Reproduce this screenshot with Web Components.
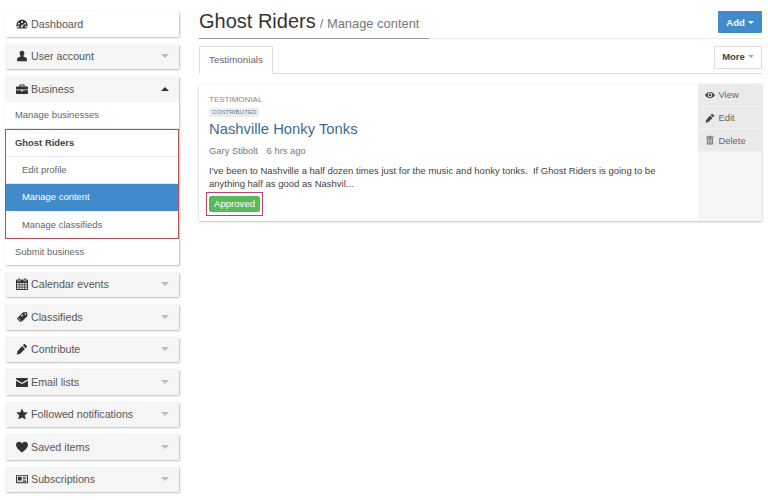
<!DOCTYPE html>
<html>
<head>
<meta charset="utf-8">
<title>Manage content</title>
<style>
  html, body { margin: 0; padding: 0; background: #fff; height: 500px; overflow: hidden; }
  body { font-family: "Liberation Sans", Arial, sans-serif; color: #333; }
</style>
</head>
<body>
<app-shell>
  <side-nav slot="side">
    <side-panel label="Dashboard" icon="dashboard" plain></side-panel>
    <side-panel label="User account" icon="user"></side-panel>
    <side-panel label="Business" icon="briefcase" open>
      <nav-link>Manage businesses</nav-link>
      <red-box>
        <nav-link strong>Ghost Riders</nav-link>
        <nav-link sub>Edit profile</nav-link>
        <nav-link sub active>Manage content</nav-link>
        <nav-link sub last>Manage classifieds</nav-link>
      </red-box>
      <nav-link last>Submit business</nav-link>
    </side-panel>
    <side-panel label="Calendar events" icon="calendar"></side-panel>
    <side-panel label="Classifieds" icon="tags"></side-panel>
    <side-panel label="Contribute" icon="pencil"></side-panel>
    <side-panel label="Email lists" icon="envelope"></side-panel>
    <side-panel label="Followed notifications" icon="star"></side-panel>
    <side-panel label="Saved items" icon="heart"></side-panel>
    <side-panel label="Subscriptions" icon="news"></side-panel>
  </side-nav>
  <page-head slot="main" title-text="Ghost Riders" sub="/ Manage content"></page-head>
  <tab-bar slot="main"></tab-bar>
  <content-card slot="main"
    kind="TESTIMONIAL" tag="CONTRIBUTED" heading="Nashville Honky Tonks"
    author="Gary Stibolt" time="6 hrs ago" status="Approved">I've been to Nashville a half dozen times just for the music and honky tonks.&nbsp; If Ghost Riders is going to be anything half as good as Nashvil...</content-card>
</app-shell>

<script>
  const ICONS = {
    dashboard: `<path fill-rule="evenodd" d="M8 2a7.500 7.500 0 0 0-7.500 7.500c0 1.700.6 3.200 1.500 4.500h12c.9-1.300 1.500-2.800 1.500-4.500A7.500 7.500 0 0 0 8 2ZM3.800 6.300a1.200 1.200 0 1 1 0 2.400 1.200 1.200 0 0 1 0-2.400Zm4.200-2.200a1.200 1.200 0 1 1 0 2.400 1.200 1.200 0 0 1 0-2.400Zm4.200 2.200a1.200 1.200 0 1 1 0 2.400 1.200 1.200 0 0 1 0-2.400ZM2.800 10.300a1.200 1.200 0 1 1 0 2.400 1.200 1.200 0 0 1 0-2.400Zm10.400 0a1.200 1.200 0 1 1 0 2.400 1.200 1.200 0 0 1 0-2.400ZM7 12.700a1.600 1.600 0 0 1 .3-2.700l3.400-2.500-1.800 4A1.600 1.600 0 0 1 7 12.700Z"/>`,
    user: `<path d="M8 1c-2 0-3.200 1.400-3.200 3.400 0 1.300.5 2.400 1.200 3.100v1.300L2.300 10.300c-.6.300-.9.7-.9 1.300V15h13.200v-3.400c0-.6-.3-1-.9-1.300L10 8.800V7.500c.7-.7 1.200-1.800 1.200-3.100C11.200 2.400 10 1 8 1Z"/>`,
    briefcase: `<path fill-rule="evenodd" d="M5.500 2h5c.6 0 1 .4 1 1v1.500H15c.5 0 1 .4 1 1v3.300H0V5.500c0-.6.5-1 1-1h3.500V3c0-.6.4-1 1-1Zm.4 1.200v1.300h4.200V3.200H5.900ZM0 9.800h6.500v1.200h3V9.800H16V13.500c0 .6-.5 1-1 1H1c-.5 0-1-.4-1-1V9.800Z"/>`,
    calendar: `<path fill-rule="evenodd" d="M3 .5h2v3H3v-3Zm8 0h2v3h-2v-3ZM1 2h1.200v2.300h3.600V2h4.400v2.300h3.600V2H15c.5 0 1 .4 1 1v12c0 .5-.5 1-1 1H1c-.5 0-1-.5-1-1V3c0-.6.5-1 1-1Zm.3 4.500v2h2.400v-2H1.300Zm3.500 0v2h2.700v-2H4.800Zm3.700 0v2h2.700v-2H8.500Zm3.800 0v2h2.400v-2h-2.400Zm-11 3v2h2.400v-2H1.300Zm3.500 0v2h2.700v-2H4.800Zm3.700 0v2h2.700v-2H8.500Zm3.800 0v2h2.400v-2h-2.400Zm-11 3v2h2.400v-2H1.300Zm3.500 0v2h2.700v-2H4.800Zm3.700 0v2h2.700v-2H8.500Zm3.800 0v2h2.400v-2h-2.400Z"/>`,
    tags: `<path fill-rule="evenodd" d="M9.500 1.500H15V7L8 14 2.500 8.500l7-7Zm3 1.500a1.100 1.100 0 1 0 0 2.200 1.100 1.100 0 0 0 0-2.200ZM6.500 6.700 7.600 7.800 9.700 5.700 8.600 4.600 6.500 6.700Z"/><path d="M1 10l5 5 1.200-1L2 9l-1 1Z"/>`,
    pencil: `<path d="M12 1.500l2.500 2.500c.4.400.4 1 0 1.400L13 6.900 9.100 3 10.600 1.500c.4-.4 1-.4 1.400 0ZM8.100 4 12 7.900 5.500 14.400 1 15.500 2 11 8.100 4Z"/>`,
    envelope: `<path d="M1 2.500h14c.5 0 1 .4 1 1v.9L8 9 0 4.400v-.9c0-.6.5-1 1-1Z"/><path d="M0 6.200 8 10.800l8-4.600v7.300c0 .5-.5 1-1 1H1c-.5 0-1-.5-1-1V6.200Z"/>`,
    star: `<path d="M8 .5l2.300 5 5.500.6-4.100 3.700 1.200 5.400L8 12.500l-4.900 2.700 1.200-5.400L.2 6.100l5.500-.6L8 .5Z"/>`,
    heart: `<path d="M8 15.500S0 10.200 0 5.100C0 2.800 1.900 1 4.100 1 5.800 1 7.300 2 8 3.500 8.700 2 10.200 1 11.900 1 14.100 1 16 2.800 16 5.100 16 10.200 8 15.500 8 15.500Z"/>`,
    news: `<path fill-rule="evenodd" d="M1 2.500h14c.6 0 1 .4 1 1v9c0 .6-.4 1-1 1H1c-.6 0-1-.4-1-1v-9c0-.6.4-1 1-1Zm.3 1.300v8.400h13.400V3.800H1.300ZM2.500 5h5v4.200h-5V5Zm6.300 0h4.700v1.100H8.800V5Zm0 2h4.700v1H8.800V7Zm0 2h4.700v1H8.800V9ZM2.500 10h5v1h-5v-1Zm6.300 0.800h4.700v.9H8.800v-.9Z"/>`,
    eye: `<path fill-rule="evenodd" d="M8 3c3.600 0 6.400 2.400 8 5-1.600 2.600-4.400 5-8 5s-6.400-2.400-8-5c1.600-2.600 4.400-5 8-5Zm0 1.500a3.500 3.500 0 1 0 0 7 3.500 3.500 0 0 0 0-7Zm0 1.500a2 2 0 1 1 0 4 2 2 0 0 1 0-4Z"/>`,
    trash: `<path fill-rule="evenodd" d="M6 1h4v1.200h4v2H2v-2h4V1ZM3 5.200h10V15H3V5.200Zm1.600 1.500V13.500h1.200V6.700H4.600Zm2.800 0V13.500h1.200V6.700H7.400Zm2.800 0V13.500h1.200V6.700h-1.200Z"/>`
  };
  const svgIcon = (name, size) =>
    `<svg width="${size}" height="${size}" viewBox="0 0 16 16" fill="currentColor" aria-hidden="true">${ICONS[name]}</svg>`;

  class AppShell extends HTMLElement {
    constructor() {
      super();
      this.attachShadow({ mode: "open" }).innerHTML = `
        <style>
          :host { display: grid; grid-template-columns: 174px 563px; column-gap: 20px; padding: 11px 6px 0 5px; }
          .main { display: flex; flex-direction: column; min-width: 0; }
        </style>
        <div><slot name="side"></slot></div>
        <div class="main"><slot name="main"></slot></div>
      `;
    }
  }

  class SideNav extends HTMLElement {
    constructor() {
      super();
      this.attachShadow({ mode: "open" }).innerHTML = `
        <style>
          :host { display: flex; flex-direction: column; gap: 7px; }
        </style>
        <slot></slot>
      `;
    }
  }

  class SidePanel extends HTMLElement {
    constructor() {
      super();
      const label = this.getAttribute("label");
      const icon = this.getAttribute("icon");
      const open = this.hasAttribute("open");
      const plain = this.hasAttribute("plain");
      this.attachShadow({ mode: "open" }).innerHTML = `
        <style>
          :host { display: block; background: #fff; border-radius: 2px; box-shadow: 1px 1px 2px rgba(0,0,0,.25), 0 0 1px rgba(0,0,0,.1); }
          .head { display: flex; align-items: center; height: 25.5px; padding: 0 10px 0 11px; background: ${plain ? "#fff" : "#f5f5f5"}; color: #555; font-size: 10.700px; }
          .head svg { flex: none; color: #333; }
          .label { margin-left: 3px; flex: 1; white-space: nowrap; }
          .caret { width: 0; height: 0; border-left: 4px solid transparent; border-right: 4px solid transparent; }
          .down { border-top: 4px solid #bbb; }
          .up { border-bottom: 4px solid #333; }
        </style>
        <div class="head">
          ${svgIcon(icon, 12)}
          <span class="label">${label}</span>
          ${plain ? "" : `<span class="caret ${open ? "up" : "down"}"></span>`}
        </div>
        <slot></slot>
      `;
    }
  }

  class RedBox extends HTMLElement {
    constructor() {
      super();
      this.attachShadow({ mode: "open" }).innerHTML = `
        <style>
          :host { display: block; border: 1px solid #b5505a; }
        </style>
        <slot></slot>
      `;
    }
  }

  class NavLink extends HTMLElement {
    constructor() {
      super();
      this.attachShadow({ mode: "open" }).innerHTML = `
        <style>
          :host { display: flex; align-items: center; box-sizing: border-box; height: 27px; padding-left: 10px; font-size: 9.450px; color: #666; border-bottom: 1px solid #e8e8e8; white-space: nowrap; }
          :host([sub]) { padding-left: 16px; }
          :host([strong]) { font-weight: bold; color: #444; padding-left: 9px; }
          :host([active]) { background: #428bca; color: #fff; border-bottom-color: #428bca; }
          :host([last]) { border-bottom: 0; height: 26px; }
          :host([sub][last]) { height: 27px; }
        </style>
        <slot></slot>
      `;
    }
  }

  class PageHead extends HTMLElement {
    constructor() {
      super();
      this.attachShadow({ mode: "open" }).innerHTML = `
        <style>
          :host { display: flex; justify-content: space-between; align-items: flex-start; box-sizing: border-box; height: 28px; border-bottom: 1px solid #eee; }
          h1 { box-sizing: border-box; margin: 0; font-size: 20px; font-weight: normal; line-height: 20px; color: #333; border-bottom: 1.500px solid #999; width: 230px; height: 28px; white-space: nowrap; }
          small { font-size: 12.900px; color: #777; margin-left: -1.500px; }
          button { all: unset; box-sizing: border-box; display: flex; align-items: center; justify-content: center; gap: 3px; width: 44px; height: 22px; background: #428bca; color: #fff; font-size: 9.500px; font-weight: bold; border-radius: 1px; }
          i { width: 0; height: 0; border-left: 3px solid transparent; border-right: 3px solid transparent; border-top: 3px solid #fff; }
        </style>
        <h1>${this.getAttribute("title-text")} <small>${this.getAttribute("sub")}</small></h1>
        <button>Add <i></i></button>
      `;
    }
  }

  class TabBar extends HTMLElement {
    constructor() {
      super();
      this.attachShadow({ mode: "open" }).innerHTML = `
        <style>
          :host { display: flex; justify-content: space-between; align-items: flex-start; box-sizing: border-box; height: 28px; margin-top: 7px; border-bottom: 1px solid #ddd; }
          .tab { box-sizing: border-box; display: flex; align-items: center; justify-content: center; width: 74px; height: 28px; padding-bottom: 2px; background: #fff; border: 1px solid #ddd; border-bottom: 0; color: #666; font-size: 9.800px; border-radius: 1px 1px 0 0; }
          .more { box-sizing: border-box; display: flex; align-items: center; justify-content: center; gap: 3px; width: 48px; height: 23px; padding-bottom: 2px; border: 1px solid #ddd; color: #444; font-size: 9.500px; font-weight: bold; background: #fff; }
          i { width: 0; height: 0; border-left: 3px solid transparent; border-right: 3px solid transparent; border-top: 3px solid #aaa; }
        </style>
        <div class="tab">Testimonials</div>
        <div class="more">More <i></i></div>
      `;
    }
  }

  class ContentCard extends HTMLElement {
    constructor() {
      super();
      const a = (n) => this.getAttribute(n);
      this.attachShadow({ mode: "open" }).innerHTML = `
        <style>
          :host { display: grid; grid-template-columns: 1fr 64px; height: 137px; margin-top: 10px; background: #fff; box-shadow: 0 1px 2px rgba(0,0,0,.22), 0 0 1px rgba(0,0,0,.1); }
          .body { padding: 11px 10px 0 10px; min-width: 0; }
          .kind { font-size: 8px; line-height: 10px; color: #888; }
          .tag { display: inline-block; margin-top: 3px; padding: 0 3px; font-size: 6px; line-height: 9px; letter-spacing: .1px; color: #6b7c8c; background: #e8edf1; border-radius: 1px; vertical-align: top; }
          .tagline { height: 14.500px; }
          h2 { margin: 0; font-size: 14.800px; line-height: 19px; font-weight: normal; color: #3c6c8e; }
          .meta { margin-top: 6.500px; font-size: 9.400px; line-height: 12px; color: #777; }
          .meta span { margin-left: 6px; }
          .text { margin: 6.500px 0 0; font-size: 9.500px; line-height: 13px; color: #444; max-width: 450px; }
          .status { display: inline-block; margin: 2.500px 0 0 -3px; padding: 3px 2px; border: 1px solid #b5476b; }
          .status b { display: block; padding: 0 5px; height: 16px; line-height: 16px; font-size: 9.600px; font-weight: normal; color: #fff; background: #5cb85c; border-radius: 2px; }
          .actions { display: flex; flex-direction: column; background: #f5f5f5; border-right: 1px solid #eee; }
          .act { display: flex; align-items: center; gap: 3.500px; box-sizing: border-box; height: 22.700px; padding-left: 7px; font-size: 9.400px; color: #666; background: #eaeaea; border-bottom: 1px solid #f2f2f2; }
          .act svg { color: #444; flex: none; }
          .act.del svg { color: #777; }
        </style>
        <div class="body">
          <div class="kind">${a("kind")}</div>
          <div class="tagline"><span class="tag">${a("tag")}</span></div>
          <h2>${a("heading")}</h2>
          <div class="meta">${a("author")} <span>${a("time")}</span></div>
          <p class="text"><slot></slot></p>
          <div class="status"><b>${a("status")}</b></div>
        </div>
        <div class="actions">
          <div class="act">${svgIcon("eye", 10)}View</div>
          <div class="act">${svgIcon("pencil", 10)}Edit</div>
          <div class="act del">${svgIcon("trash", 10)}Delete</div>
        </div>
      `;
    }
  }

  customElements.define("app-shell", AppShell);
  customElements.define("side-nav", SideNav);
  customElements.define("side-panel", SidePanel);
  customElements.define("red-box", RedBox);
  customElements.define("nav-link", NavLink);
  customElements.define("page-head", PageHead);
  customElements.define("tab-bar", TabBar);
  customElements.define("content-card", ContentCard);
</script>
</body>
</html>
